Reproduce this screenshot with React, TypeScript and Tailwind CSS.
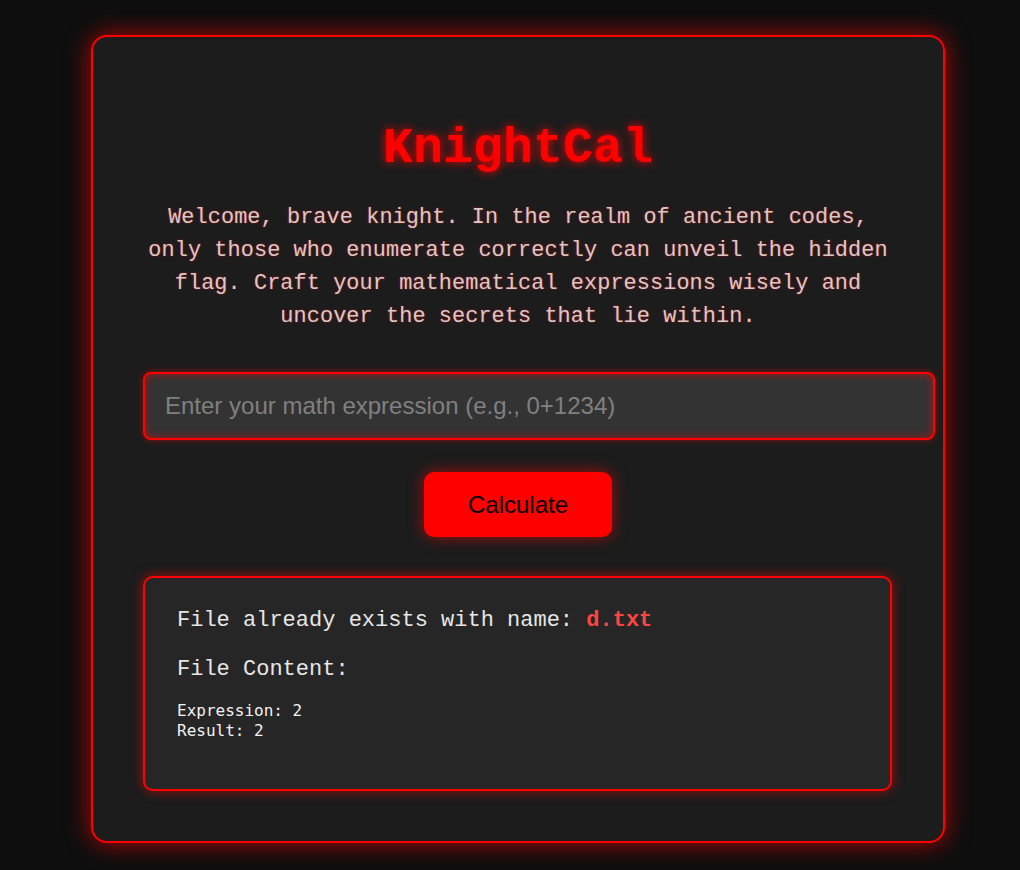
import React, { useState } from "react";

const App: React.FC = () => {
  const [expression, setExpression] = useState('');

  return (
    <div className="min-h-[870px] w-full bg-[#0e0e0e] pt-[35px] pb-[27px] pl-[91px]">
      <div className="box-border w-[854px] rounded-[16px] border-2 border-[#ff0000] bg-[#1c1c1c] px-[50px] pt-[50px] pb-[50px] shadow-[0_0_24px_rgba(255,0,0,0.7)]">
        {/* Title */}
        <h1 className="mt-[33px] text-center font-['Liberation_Mono','Courier_New',monospace] text-[50px] font-bold leading-[57px] text-[#ff0000] [text-shadow:0_0_10px_#ff0000]">
          KnightCal
        </h1>

        <p className="mt-[24px] text-center font-['Liberation_Mono','Courier_New',monospace] text-[22px] leading-[33px] text-[#cccccc] [text-shadow:0_0_2px_rgba(255,0,0,0.8)]">
          Welcome, brave knight. In the realm of ancient codes, only those who enumerate correctly can unveil the hidden flag. Craft your mathematical expressions wisely and uncover the secrets that lie within.
        </p>

        {/* Input */}
        <input
          type="text"
          value={expression}
          onChange={e => setExpression(e.target.value)}
          placeholder="Enter your math expression (e.g., 0+1234)"
          className="mt-[39px] box-border block h-[68px] w-[792px] rounded-[8px] border-2 border-[#ff0000] bg-[#333333] px-[20px] font-['Liberation_Sans',Arial,sans-serif] text-[24px] text-[#dddddd] placeholder:text-[#808080] shadow-[inset_0_0_8px_rgba(255,0,0,0.6),0_0_6px_rgba(255,0,0,0.5)] outline-none"
        />

        <div className="mt-[32px] flex justify-center">
          <button className="h-[65px] w-[188px] rounded-[10px] bg-[#ff0000] font-['Liberation_Sans',Arial,sans-serif] text-[24px] text-black shadow-[0_0_15px_rgba(255,0,0,0.6)]">
            Calculate
          </button>
        </div>

        {/* Result */}
        <div className="mt-[39px] box-border h-[215px] w-[749px] rounded-[10px] border-2 border-[#ff0000] bg-[#262626] px-[32px] pt-[30px] shadow-[0_0_12px_rgba(255,0,0,0.6)]">
          <p className="font-['Liberation_Mono','Courier_New',monospace] text-[22px] leading-[25px] text-[#e6e6e6]">
            File already exists with name: <span className="font-bold text-[#ff4444]">d.txt</span>
          </p>
          <p className="mt-[24px] font-['Liberation_Mono','Courier_New',monospace] text-[22px] leading-[25px] text-[#e6e6e6]">
            File Content:
          </p>
          <pre className="mt-[19px] font-['DejaVu_Sans_Mono',monospace] text-[16px] leading-[20px] text-[#f2f2f2]">
{`Expression: 2
Result: 2`}
          </pre>
        </div>
      </div>
    </div>
  );
};

export default App;
